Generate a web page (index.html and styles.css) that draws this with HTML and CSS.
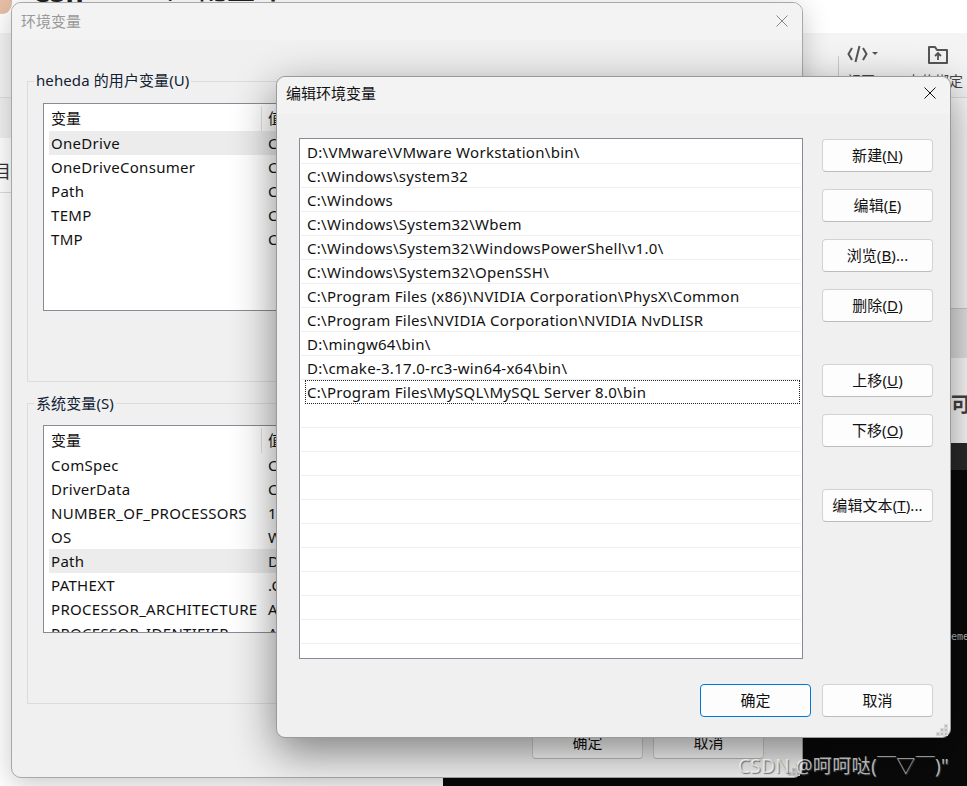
FILE: index.html
```html
<!DOCTYPE html>
<html lang="zh-CN">
<head>
<meta charset="utf-8">
<title>编辑环境变量</title>
<link rel="stylesheet" href="styles.css">
</head>
<body>
<div class="desktop">
  <div class="page">
    <div class="col-left">
      <div class="topbar"><div class="avatar"></div><div class="page-title"><span class="pt-a">CSh</span><span class="pt-b">/</span><span class="pt-c">配置环</span></div></div>
      <div class="toolbar"></div>
      <div class="tabs"></div>
      <div class="left-row"><span class="left-char">目</span></div>
      <div class="left-rest"></div>
    </div>
    <div class="col-right">
      <div class="topbar"></div>
      <div class="toolbar toolbar-right">
        <span class="tool-sep"></span>
        <div class="tool tool-code">
          <svg class="ico-code" viewBox="0 0 21 18" width="21" height="18"><path d="M5 3 1.500 9 5 15M16 3l3.500 6L16 15M12.500 1l-4 16" fill="none" stroke="#555" stroke-width="2"/></svg>
          <svg class="ico-caret" viewBox="0 0 6 3" width="6" height="3"><path d="M0 0h6L3 3z" fill="#555"/></svg>
          <span class="tool-label">视图</span>
        </div>
        <div class="tool tool-upload">
          <svg viewBox="0 0 22 20" width="22" height="20"><path d="M2 18V2h6l2 3h10v13z" fill="none" stroke="#555" stroke-width="2" stroke-linejoin="round"/><path d="M11 15V8.500M8 11l3-3 3 3" fill="none" stroke="#555" stroke-width="1.800"/></svg>
          <span class="tool-label">上传绑定</span>
        </div>
      </div>
      <div class="panel-soft"></div>
      <div class="panel-grey"></div>
      <div class="panel-head">可以</div>
      <div class="code-head"></div>
      <div class="code-body"><span class="code-line">element</span></div>
    </div>
  </div>

  <section class="win win-env">
    <header class="win-title win-title-off">
      <span>环境变量</span>
      <svg class="close" viewBox="0 0 12 12" width="12" height="12"><path d="M.5.500l11 11M11.500.500l-11 11" stroke="#888" fill="none"/></svg>
    </header>
    <div class="env-body">
      <div class="group">
        <span class="legend">heheda 的用户变量(U)</span>
        <div class="lv">
          <div class="lv-row lv-head"><span class="lv-name">变量</span><span class="lv-val">值</span></div>
          <div class="lv-row lv-sel"><span class="lv-name">OneDrive</span><span class="lv-val">C:\Users\heheda\OneDrive</span></div>
          <div class="lv-row"><span class="lv-name">OneDriveConsumer</span><span class="lv-val">C:\Users\heheda\OneDrive</span></div>
          <div class="lv-row"><span class="lv-name">Path</span><span class="lv-val">C:\Users\heheda\AppData</span></div>
          <div class="lv-row"><span class="lv-name">TEMP</span><span class="lv-val">C:\Users\heheda\AppData\Local\Temp</span></div>
          <div class="lv-row"><span class="lv-name">TMP</span><span class="lv-val">C:\Users\heheda\AppData\Local\Temp</span></div>
        </div>
      </div>
      <div class="group">
        <span class="legend">系统变量(S)</span>
        <div class="lv">
          <div class="lv-row lv-head"><span class="lv-name">变量</span><span class="lv-val">值</span></div>
          <div class="lv-row"><span class="lv-name">ComSpec</span><span class="lv-val">C:\Windows\system32\cmd.exe</span></div>
          <div class="lv-row"><span class="lv-name">DriverData</span><span class="lv-val">C:\Windows\System32\Drivers\DriverData</span></div>
          <div class="lv-row"><span class="lv-name">NUMBER_OF_PROCESSORS</span><span class="lv-val">16</span></div>
          <div class="lv-row"><span class="lv-name">OS</span><span class="lv-val">Windows_NT</span></div>
          <div class="lv-row lv-sel"><span class="lv-name">Path</span><span class="lv-val">D:\VMware\VMware Workstation\bin\</span></div>
          <div class="lv-row"><span class="lv-name">PATHEXT</span><span class="lv-val">.COM;.EXE;.BAT;.CMD</span></div>
          <div class="lv-row"><span class="lv-name">PROCESSOR_ARCHITECTURE</span><span class="lv-val">AMD64</span></div>
          <div class="lv-row"><span class="lv-name">PROCESSOR_IDENTIFIER</span><span class="lv-val">AMD64 Family</span></div>
        </div>
      </div>
      <div class="env-foot">
        <button class="btn">确定</button>
        <button class="btn">取消</button>
      </div>
    </div>
    <svg class="grip" viewBox="0 0 12 12" width="12" height="12"><path d="M8 0h4v4H8zM4 4h8v4H4zM0 8h12v4H0z" fill="#d0d0d0"/><path d="M9 1h2v2H9zM5 5h2v2H5zM9 5h2v2H9zM1 9h2v2H1zM5 9h2v2H5zM9 9h2v2H9z" fill="#b8b8b8"/></svg>
  </section>

  <section class="win win-edit">
    <header class="win-title">
      <span>编辑环境变量</span>
      <svg class="close" viewBox="0 0 12 12" width="12" height="12"><path d="M.5.500l11 11M11.500.500l-11 11" stroke="#111" fill="none"/></svg>
    </header>
    <div class="edit-body">
      <div class="path-list">
        <div class="path-row">D:\VMware\VMware Workstation\bin\</div>
        <div class="path-row">C:\Windows\system32</div>
        <div class="path-row">C:\Windows</div>
        <div class="path-row">C:\Windows\System32\Wbem</div>
        <div class="path-row">C:\Windows\System32\WindowsPowerShell\v1.0\</div>
        <div class="path-row">C:\Windows\System32\OpenSSH\</div>
        <div class="path-row">C:\Program Files (x86)\NVIDIA Corporation\PhysX\Common</div>
        <div class="path-row">C:\Program Files\NVIDIA Corporation\NVIDIA NvDLISR</div>
        <div class="path-row">D:\mingw64\bin\</div>
        <div class="path-row">D:\cmake-3.17.0-rc3-win64-x64\bin\</div>
        <div class="path-row path-focus"><span class="focus-box">C:\Program Files\MySQL\MySQL Server 8.0\bin</span></div>
        <div class="path-row"></div><div class="path-row"></div><div class="path-row"></div><div class="path-row"></div><div class="path-row"></div>
        <div class="path-row"></div><div class="path-row"></div><div class="path-row"></div><div class="path-row"></div><div class="path-row"></div>
      </div>
      <div class="side">
        <button class="btn">新建(<u>N</u>)</button>
        <button class="btn">编辑(<u>E</u>)</button>
        <button class="btn">浏览(<u>B</u>)...</button>
        <button class="btn">删除(<u>D</u>)</button>
        <button class="btn btn-sep">上移(<u>U</u>)</button>
        <button class="btn">下移(<u>O</u>)</button>
        <button class="btn btn-sep">编辑文本(<u>T</u>)...</button>
      </div>
    </div>
    <div class="edit-foot">
      <button class="btn btn-primary">确定</button>
      <button class="btn">取消</button>
    </div>
    <svg class="grip" viewBox="0 0 12 12" width="12" height="12"><path d="M8 0h4v4H8zM4 4h8v4H4zM0 8h12v4H0z" fill="#d8d8d8"/><path d="M9 1h2v2H9zM5 5h2v2H5zM9 5h2v2H9zM1 9h2v2H1zM5 9h2v2H5zM9 9h2v2H9z" fill="#bcbcbc"/></svg>
  </section>

  <div class="watermark">CSDN @呵呵哒(￣▽￣)"</div>
</div>
</body>
</html>
```
FILE: styles.css
```css
* { box-sizing: border-box; }
html, body { margin: 0; padding: 0; }
body {
  font-family: "Noto Sans", "Noto Sans CJK SC", sans-serif;
  font-size: 15px;
  color: #111;
  background: #fff;
}
.desktop { position: relative; width: 967px; height: 786px; overflow: hidden; }

/* browser page behind the dialogs */
.page { display: flex; height: 786px; }
.col-left { width: 443px; flex: none; display: flex; flex-direction: column; }
.col-right { flex: 1; min-width: 0; display: flex; flex-direction: column; }
.topbar { height: 33px; background: #fff; position: relative; overflow: hidden; flex: none; }
.avatar { position: absolute; left: -8px; top: -8px; width: 20px; height: 22px; border-radius: 50%; background: radial-gradient(circle at 60% 70%, #e6bfa6 0 45%, #7a4a30 75%); }
.page-title { position: absolute; left: 32px; top: -30px; display: flex; font-size: 28px; line-height: 36px; font-weight: 700; color: #222; white-space: nowrap; }
.pt-a { margin-top: 3px; }
.pt-b { margin-left: 85px; margin-top: 2px; font-weight: 400; }
.pt-c { margin-left: 20px; }
.toolbar { height: 65px; background: #f4f4f4; border-bottom: 1px solid #ddd; flex: none; }
.toolbar-right { position: relative; }
.tabs { height: 40px; background: #f0f0f0; flex: none; }
.left-row { height: 55px; background: #fff; border-bottom: 1px solid #ddd; display: flex; align-items: center; flex: none; padding-top: 9px; }
.left-char { font-size: 18px; margin-left: -7px; color: #333; }
.left-rest { flex: 1; background: #fff; }
.tool-sep { position: absolute; left: 395px; top: 23px; width: 1px; height: 20px; background: #ccc; }
.tool { position: absolute; top: 12px; }
.tool svg { display: block; }
.tool-code { left: 404px; }
.ico-caret { position: absolute; left: 25px; top: 7px; }
.tool-upload { left: 484px; }
.tool-label { position: absolute; top: 27px; left: 0; font-size: 14px; line-height: 18px; white-space: nowrap; color: #444; }
.tool-upload .tool-label { left: -20px; }
.panel-soft { height: 210px; background: #fafafa; flex: none; }
.panel-grey { height: 50px; background: #e6e6e6; border-top: 1px solid #ccc; flex: none; }
.panel-head { height: 85px; background: #fff; flex: none; font-size: 20px; font-weight: 700; line-height: 24px; color: #444; padding: 35px 0 0 508px; white-space: nowrap; overflow: hidden; }
.code-head { height: 27px; background: #2b2b2b; flex: none; }
.code-body { flex: 1; background: #0a0a0a; position: relative; }
.code-line { position: absolute; left: 496px; top: 160px; font-family: "DejaVu Sans Mono", monospace; font-size: 10px; line-height: 14px; color: #bbb; white-space: nowrap; }

/* dialogs: windows on a desktop */
.win { position: absolute; background: #f0f0f0; border: 1px solid #a8a8a8; display: flex; flex-direction: column; }
.win-env { left: 11px; top: 2px; width: 792px; height: 776px; border-radius: 10px; box-shadow: 0 6px 28px rgba(0,0,0,.22); }
.win-edit { left: 276px; top: 76px; width: 675px; height: 662px; border-radius: 9px; border-color: #9a9a9a; box-shadow: 0 14px 44px rgba(0,0,0,.48); }
.win-title { height: 37px; flex: none; display: flex; align-items: center; justify-content: space-between; padding: 0 14px 7px 9px; background: #f3f3f3; border-radius: 9px 9px 0 0; }
.win-title-off { color: #999; padding-bottom: 3px; }
.close { display: block; margin-top: 2px; }
.grip { position: absolute; right: 2px; bottom: 1px; }

.env-body { padding: 41px 15px 0; display: flex; flex-direction: column; gap: 21px; }
.group { position: relative; height: 301px; border: 1px solid #dcdcdc; padding: 21px 15px 0; }
.legend { position: absolute; left: 6px; top: -13px; padding: 0 2px; line-height: 22px; background: #f0f0f0; color: #123; white-space: nowrap; letter-spacing: .1px; }
.group + .group .legend { top: -12px; }
.lv { height: 208px; background: #fff; border: 1px solid #8a8a96; overflow: hidden; padding-left: 5px; }
.lv-row { display: flex; height: 24px; line-height: 24px; white-space: nowrap; letter-spacing: .3px; }
.lv-head { height: 27px; line-height: 29px; position: relative; letter-spacing: 0; }
.lv-head::after { content: ""; position: absolute; left: 212px; top: 2px; width: 1px; height: 25px; background: #e2e2e2; }
.lv-sel { background: #ececec; }
.lv-name { width: 219px; padding-left: 2px; flex: none; }
.env-foot { display: flex; justify-content: flex-end; gap: 10px; margin-top: 1px; padding-right: 23px; }

.btn { width: 111px; height: 33px; flex: none; padding: 0 0 3px; font: inherit; letter-spacing: .1px; color: #111; background: #fdfdfd; border: 1px solid #d2d2d2; border-bottom-color: #bcbcbc; border-radius: 4px; white-space: nowrap; }
.btn-primary { border-color: #0078d4; }
.btn-sep { margin-top: 25px; }

.edit-body { display: flex; gap: 19px; padding: 24px 0 0 22px; }
.path-list { width: 504px; height: 521px; background: #fff; border: 1px solid #8a8a96; padding: 0 1px; overflow: hidden; flex: none; }
.path-row { height: 24px; padding-left: 6px; line-height: 24px; border-bottom: 1px solid #efefef; white-space: nowrap; letter-spacing: .28px; }
.path-row:first-child { height: 25px; padding-top: 1px; }
.path-focus { padding: 0 1px 0 4px; border-bottom: 0; }
.focus-box { display: block; height: 24px; padding-left: 1px; border: 1px dotted #222; line-height: 23px; }
.side { display: flex; flex-direction: column; gap: 17px; padding-top: 1px; }
.edit-foot { display: flex; justify-content: flex-end; gap: 11px; padding: 25px 17px 0 0; }

.watermark { position: absolute; left: 738px; top: 752px; font-size: 19px; line-height: 28px; letter-spacing: .35px; color: rgba(255,255,255,.68); text-shadow: 1px 1px 1px rgba(70,70,70,.7); white-space: nowrap; }
```
